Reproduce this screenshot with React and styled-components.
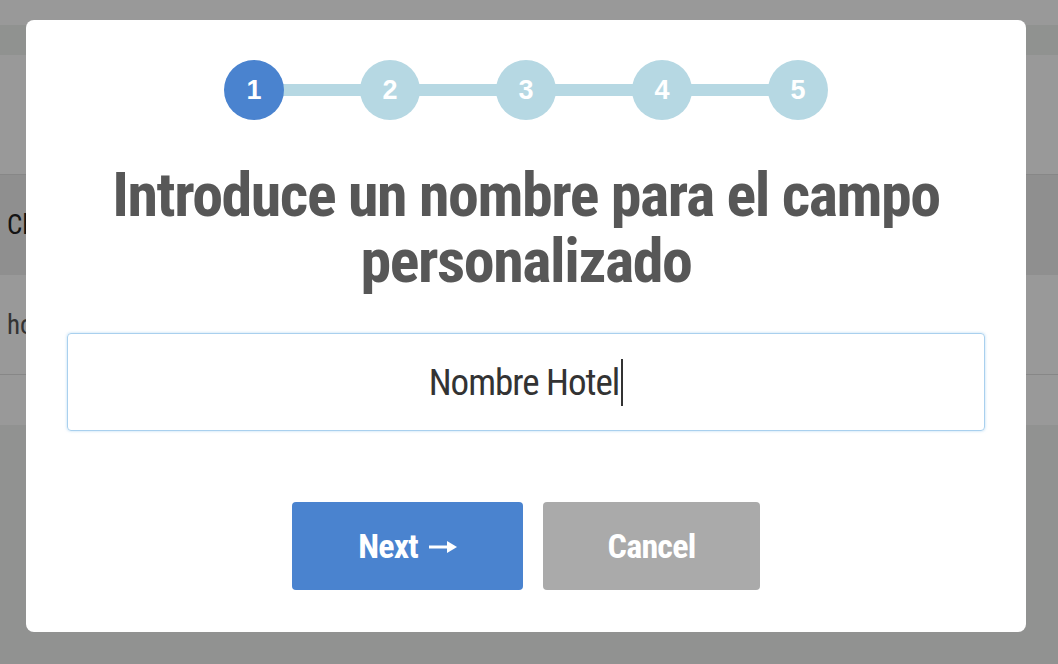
import React from "react";
import styled, { createGlobalStyle } from "styled-components";

const Global = createGlobalStyle`
  html, body { margin: 0; padding: 0; height: 100%; }
  body { font-family: "Roboto", "Liberation Sans", sans-serif; background: #f2f2f2; overflow: hidden; }
  #root { min-height: 100%; }
`;

const Page = styled.div`
  display: flex;
  flex-direction: column;
  min-height: 664px;
  background: #f2f3f2;
`;

const TopBar = styled.div`
  height: 25px;
  background: #ffffff;
`;

const SubBar = styled.div`
  height: 30px;
  background: #f0f3f1;
`;

const Section = styled.div`
  height: ${(p) => p.$h}px;
  background: ${(p) => p.$bg};
  border-bottom: ${(p) => (p.$line ? "1px solid #e2e2e2" : "none")};
  display: flex;
  align-items: center;
  padding-left: 7px;
  box-sizing: border-box;
  font-family: "Roboto Condensed", "Roboto", sans-serif;
  font-stretch: condensed;
  font-size: 27px;
  color: ${(p) => p.$color || "#333"};
`;

const Overlay = styled.div`
  position: fixed;
  inset: 0;
  background: rgba(0, 0, 0, 0.4);
  display: flex;
  align-items: flex-start;
  padding: 20px 32px 0 26px;
`;

const Modal = styled.div`
  width: 1000px;
  height: 612px;
  box-sizing: border-box;
  background: #ffffff;
  border-radius: 8px;
  padding: 40px 41px 42px;
  display: flex;
  flex-direction: column;
  align-items: center;
`;

const Stepper = styled.div`
  display: flex;
  align-items: center;
`;

const Step = styled.div`
  width: 60px;
  height: 60px;
  border-radius: 50%;
  background: ${(p) => (p.$active ? "#4a83cf" : "#b6d8e3")};
  color: #ffffff;
  display: flex;
  align-items: center;
  justify-content: center;
  font-family: "Liberation Sans", Arial, sans-serif;
  font-weight: 700;
  font-size: 27px;
  position: relative;
  z-index: 1;
`;

const Connector = styled.div`
  width: 80px;
  height: 12px;
  background: #b6d8e3;
  margin: 0 -2px;
`;

const Title = styled.h1`
  margin: 42px 0 0;
  font-family: "Roboto Condensed", "Roboto", sans-serif;
  font-stretch: condensed;
  font-weight: 700;
  font-size: 62px;
  line-height: 66px;
  letter-spacing: -1.45px;
  color: #575757;
  text-align: center;
  width: 880px;
`;

const Field = styled.div`
  margin-top: 39px;
  width: 100%;
  height: 98px;
  box-sizing: border-box;
  border: 1px solid #a9d0ee;
  border-radius: 4px;
  box-shadow: 0 0 3px rgba(140, 195, 235, 0.6);
  display: flex;
  align-items: center;
  justify-content: center;
  font-family: "Roboto Condensed", "Roboto", sans-serif;
  font-stretch: condensed;
  font-size: 37px;
  letter-spacing: -1px;
  color: #333333;
`;

const Caret = styled.span`
  display: inline-block;
  width: 2px;
  height: 47px;
  background: #333;
  margin-left: 2px;
`;

const Actions = styled.div`
  margin-top: 71px;
  display: flex;
  gap: 20px;
`;

const Button = styled.button`
  height: 88px;
  width: ${(p) => p.$w}px;
  border: none;
  border-radius: 4px;
  background: ${(p) => p.$bg};
  color: #ffffff;
  font-family: "Roboto Condensed", "Roboto", sans-serif;
  font-stretch: condensed;
  font-weight: 700;
  font-size: 34px;
  letter-spacing: -0.8px;
  display: flex;
  align-items: center;
  justify-content: center;
  gap: 11px;
  cursor: pointer;
  padding: 0;
`;

const Arrow = styled.svg`
  width: 28px;
  height: 14px;
  margin-top: 2px;
`;

export default function App() {
  return (
    <>
      <Global />
      <Page>
        <TopBar />
        <SubBar />
        <Section $h={120} $bg="#ffffff" $line />
        <Section $h={100} $bg="#eeeeee" $color="#222">Clave</Section>
        <Section $h={100} $bg="#ffffff" $line $color="#555">hotel_name</Section>
        <Section $h={50} $bg="#ffffff" />
      </Page>
      <Overlay>
        <Modal>
          <Stepper>
            {[1, 2, 3, 4, 5].map((n, i) => (
              <React.Fragment key={n}>
                {i > 0 && <Connector />}
                <Step $active={n === 1}>{n}</Step>
              </React.Fragment>
            ))}
          </Stepper>
          <Title>Introduce un nombre para el campo personalizado</Title>
          <Field>
            Nombre Hotel
            <Caret />
          </Field>
          <Actions>
            <Button $w={231} $bg="#4a83cf">
              Next
              <Arrow viewBox="0 0 28 14" aria-hidden="true">
                <rect x="0" y="5.5" width="21" height="3" fill="#fff" />
                <polygon points="18,1 28,7 18,13" fill="#fff" />
              </Arrow>
            </Button>
            <Button $w={217} $bg="#aaaaaa">Cancel</Button>
          </Actions>
        </Modal>
      </Overlay>
    </>
  );
}
